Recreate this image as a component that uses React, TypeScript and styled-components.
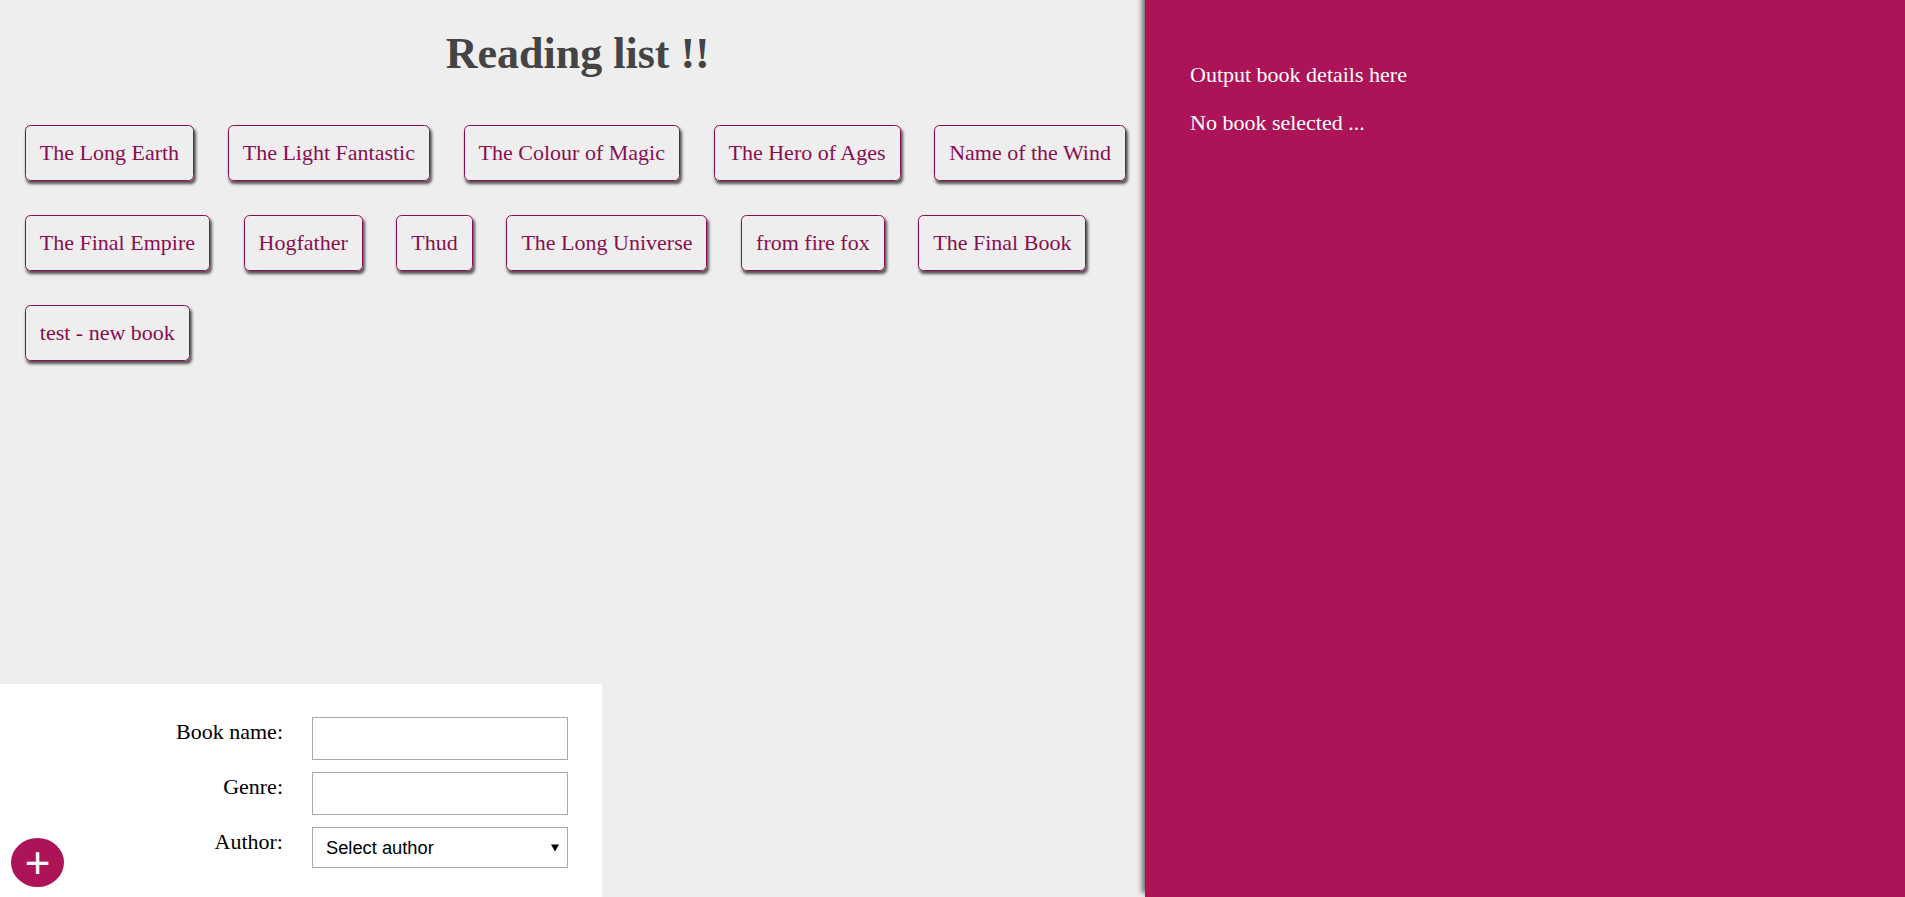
import React from "react";
import styled, { createGlobalStyle } from "styled-components";

const GlobalStyle = createGlobalStyle`
  html, body {
    margin: 0;
    padding: 0;
    height: 100%;
  }
  body {
    background: #eee;
    font-family: "Liberation Serif", "Times New Roman", serif;
    font-size: 22px;
  }
  #root {
    height: 100%;
  }
`;

const Page = styled.div`
  display: flex;
  height: 100vh;
  overflow: hidden;
`;

const LeftColumn = styled.main`
  flex: 1;
  min-width: 0;
  display: flex;
  flex-direction: column;
`;

const Content = styled.div`
  padding: 0 0 0 8px;
`;

const Title = styled.h1`
  margin: 28px 0 29px;
  padding-left: 2.5px;
  text-align: center;
  color: #444;
  font-size: 44px;
  font-weight: bold;
`;

const BookList = styled.ul`
  margin: 0 -12px 0 0;
  padding: 0;
  list-style: none;
`;

const BookItem = styled.li`
  display: inline-block;
  margin: 17px 16.8px;
  padding: 14px;
  border: 1px solid #880e4f;
  border-radius: 5.5px;
  box-shadow: 1.5px 3px 3px rgba(0, 0, 0, 0.65);
  color: #880e4f;
  cursor: pointer;
`;

const Form = styled.form`
  position: relative;
  margin-top: auto;
  width: 602px;
  box-sizing: border-box;
  padding: 27px 34px 23px 27px;
  background: #fff;
`;

const Field = styled.div`
  display: grid;
  grid-template-columns: 264px 256px;
  column-gap: 21px;
`;

const Label = styled.label`
  text-align: right;
  padding: 8px;
  color: #000;
`;

const TextInput = styled.input`
  margin: 6px 0;
  height: 43px;
  box-sizing: border-box;
  border: 1px solid #a9a9a9;
  padding: 0 8px;
  font-family: "Liberation Sans", Arial, sans-serif;
  font-size: 18px;
  background: #fff;
  outline: none;
`;

const SelectWrap = styled.div`
  position: relative;
  margin: 6px 0;
  height: 41px;
`;

const Select = styled.select`
  appearance: none;
  -webkit-appearance: none;
  width: 100%;
  height: 41px;
  box-sizing: border-box;
  border: 1px solid #a9a9a9;
  border-radius: 0;
  padding: 0 24px 0 13px;
  font-family: "Liberation Sans", Arial, sans-serif;
  font-size: 18.3px;
  color: #000;
  background: #fff;
  outline: none;
`;

const Arrow = styled.svg`
  position: absolute;
  right: 9px;
  top: 17px;
  pointer-events: none;
`;

const AddButton = styled.button`
  position: absolute;
  left: 11px;
  bottom: 10px;
  width: 53px;
  height: 49px;
  padding: 0;
  border: 0;
  border-radius: 50%;
  background: #ad1457;
  color: #fff;
  font-family: "Liberation Sans", Arial, sans-serif;
  font-size: 44px;
  line-height: 49px;
  text-align: center;
  cursor: pointer;
`;

const DetailsPanel = styled.aside`
  position: relative;
  z-index: 1;
  width: 760px;
  flex: none;
  box-sizing: border-box;
  padding: 40px 45px;
  background: #ad1457;
  color: #fff;
  box-shadow: -3px -4px 5px rgba(0, 0, 0, 0.55);
  overflow: auto;
`;

const DetailText = styled.p`
  margin: 22px 0;
`;

const books = [
  "The Long Earth",
  "The Light Fantastic",
  "The Colour of Magic",
  "The Hero of Ages",
  "Name of the Wind",
  "The Final Empire",
  "Hogfather",
  "Thud",
  "The Long Universe",
  "from fire fox",
  "The Final Book",
  "test - new book",
];

export default function App() {
  return (
    <>
      <GlobalStyle />
      <Page>
        <LeftColumn>
          <Content>
            <Title>Reading list !!</Title>
            <BookList>
              {books.map((b) => (
                <BookItem key={b}>{b}</BookItem>
              ))}
            </BookList>
          </Content>
          <Form onSubmit={(e) => e.preventDefault()}>
            <Field>
              <Label>Book name:</Label>
              <TextInput type="text" />
            </Field>
            <Field>
              <Label>Genre:</Label>
              <TextInput type="text" />
            </Field>
            <Field>
              <Label>Author:</Label>
              <SelectWrap>
                <Select defaultValue="">
                  <option value="">Select author</option>
                </Select>
                <Arrow width="8" height="8" viewBox="0 0 8 8">
                  <polygon points="0,0.5 8,0.5 4,7.5" fill="#000" />
                </Arrow>
              </SelectWrap>
            </Field>
            <AddButton type="submit">+</AddButton>
          </Form>
        </LeftColumn>
        <DetailsPanel>
          <DetailText>Output book details here</DetailText>
          <DetailText>No book selected ...</DetailText>
        </DetailsPanel>
      </Page>
    </>
  );
}
